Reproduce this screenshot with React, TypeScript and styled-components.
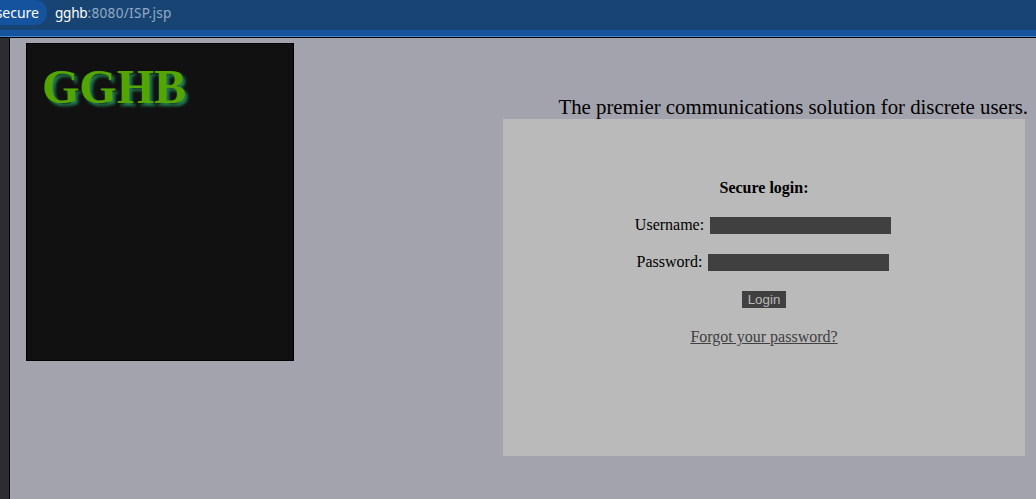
import React from 'react';
import styled, { createGlobalStyle } from 'styled-components';

const GlobalStyle = createGlobalStyle`
  * { box-sizing: border-box; }
  body { margin: 0; overflow: hidden; background: #a3a3ad; }
`;

const Window = styled.div`
  display: flex;
  flex-direction: column;
  width: 1036px;
  height: 499px;
  overflow: hidden;
  font-family: 'Liberation Serif', serif;
  font-size: 16px;
  color: #000;
`;

const Toolbar = styled.header`
  display: flex;
  align-items: flex-start;
  height: 38px;
  flex: none;
  background: linear-gradient(#184474 0 30px, #15539e 30px 36px, #4a86cb 36px 37px, #000 37px);
  font-family: 'Noto Sans', sans-serif;
  white-space: nowrap;
`;

const SecurityChip = styled.div`
  display: flex;
  justify-content: flex-end;
  width: 47px;
  height: 25px;
  padding-right: 8px;
  overflow: hidden;
  border-radius: 0 12px 12px 0;
  background: #15539e;
  color: #fff;
  font-size: 14px;
  line-height: 25px;
`;

const Address = styled.div`
  margin-left: 8px;
  color: #93abc6;
  font-size: 13.6px;
  letter-spacing: 0.3px;
  line-height: 26px;
`;

const Host = styled.span`
  color: #fff;
  letter-spacing: -0.25px;
`;

const Viewport = styled.div`
  display: flex;
  flex: 1;
`;

const WindowEdge = styled.div`
  width: 10px;
  background: #2d2c30;
  border-right: 1px solid #000;
`;

const Page = styled.main`
  display: flex;
  flex: 1;
  justify-content: space-between;
  align-items: flex-start;
  padding: 5px 8px 0 16px;
  background: #a3a3ad;
`;

const Banner = styled.section`
  width: 268px;
  height: 318px;
  padding: 15px;
  border: 1px solid #000;
  background: #111;
`;

const Brand = styled.h1`
  margin: 0;
  color: #53a600;
  font-size: 48px;
  line-height: 55px;
  text-shadow: 3px 3px 3px #227d4f;
`;

const Content = styled.section`
  display: flex;
  flex-direction: column;
  width: 525px;
  padding-top: 52px;
`;

const Tagline = styled.p`
  margin: 0;
  font-size: 20.8px;
  line-height: 24px;
  text-align: right;
  white-space: nowrap;
`;

const LoginPanel = styled.form`
  display: flex;
  flex-direction: column;
  align-items: center;
  width: 522px;
  height: 337px;
  padding-top: 60px;
  background: #bababa;
`;

const Heading = styled.strong`
  line-height: 18px;
`;

const Field = styled.label`
  display: flex;
  align-items: flex-start;
  gap: 6px;
  height: 17px;
  margin-top: 20px;
  padding-right: 2px;
  line-height: 15px;
`;

const Input = styled.input`
  width: 181px;
  height: 17px;
  padding: 1px 2px;
  border: 0;
  background: #404040;
  color: #bababa;
`;

const LoginButton = styled.button`
  width: 44px;
  height: 17px;
  margin-top: 20px;
  padding: 0;
  border: 0;
  background: #404040;
  color: #bababa;
  font: 13.333px/17px 'Liberation Sans', sans-serif;
`;

const ForgotLink = styled.a`
  margin-top: 20px;
  color: #404040;
  line-height: 18px;
  text-decoration: underline;
`;

export default function App() {
  return (
    <>
      <GlobalStyle />
      <Window>
        <Toolbar>
          <SecurityChip>secure</SecurityChip>
          <Address>
            <Host>gghb</Host>:8080/ISP.jsp
          </Address>
        </Toolbar>
        <Viewport>
          <WindowEdge />
          <Page>
            <Banner>
              <Brand>GGHB</Brand>
            </Banner>
            <Content>
              <Tagline>The premier communications solution for discrete users.</Tagline>
              <LoginPanel>
                <Heading>Secure login:</Heading>
                <Field>
                  Username:
                  <Input type="text" />
                </Field>
                <Field>
                  Password:
                  <Input type="password" />
                </Field>
                <LoginButton type="button">Login</LoginButton>
                <ForgotLink href="#">Forgot your password?</ForgotLink>
              </LoginPanel>
            </Content>
          </Page>
        </Viewport>
      </Window>
    </>
  );
}
